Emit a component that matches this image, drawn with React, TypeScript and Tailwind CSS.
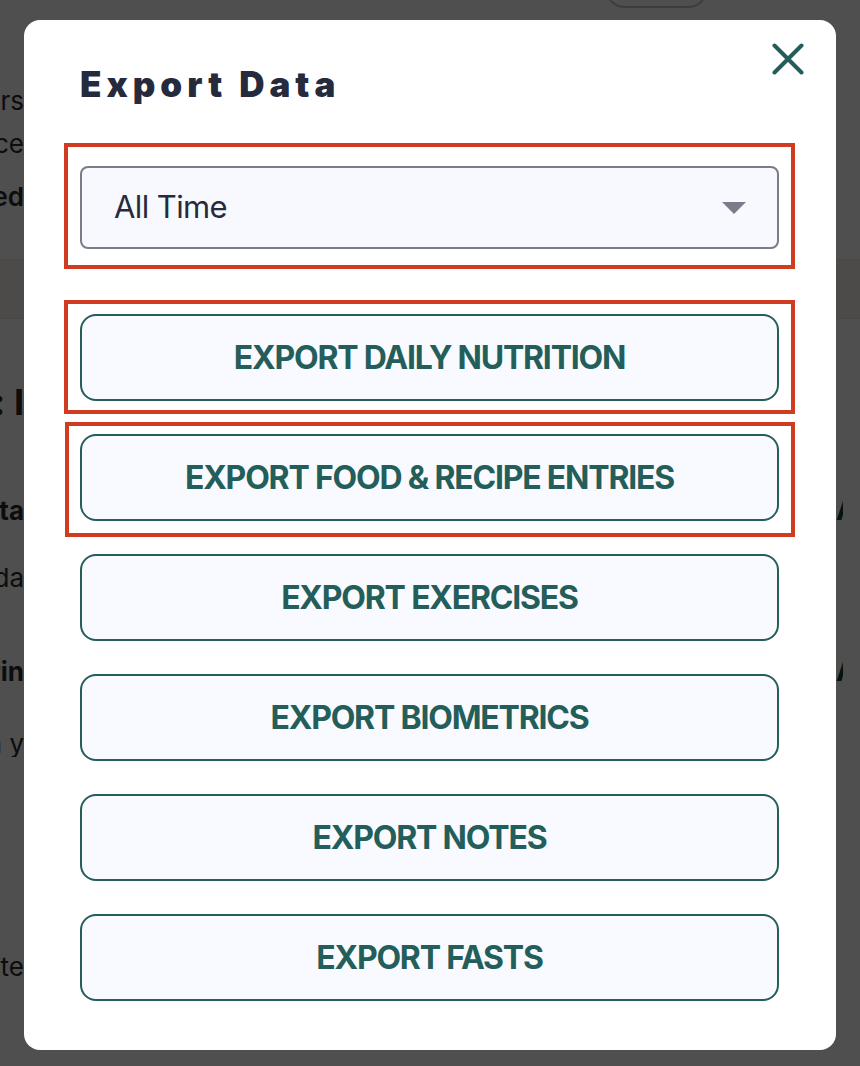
import { ReactNode } from "react";

const options = [
  { label: "EXPORT DAILY NUTRITION", marked: "top-[-14px] bottom-[-13px] left-[-16px] right-[-16px]" },
  { label: "EXPORT FOOD & RECIPE ENTRIES", marked: "top-[-12px] bottom-[-16px] left-[-15px] right-[-16px]" },
  { label: "EXPORT EXERCISES" },
  { label: "EXPORT BIOMETRICS" },
  { label: "EXPORT NOTES" },
  { label: "EXPORT FASTS" },
];

// page sitting behind the dimmed overlay, only its edges show
function EdgeRow({
  left,
  right,
  className,
}: {
  left?: ReactNode;
  right?: ReactNode;
  className?: string;
}) {
  return (
    <div className={`flex items-center justify-between ${className ?? ""}`}>
      <div className="flex w-[24px] justify-end overflow-hidden">
        <span className="shrink-0 whitespace-nowrap">{left}</span>
      </div>
      <div className="flex w-[24px] justify-start">
        <div className="w-[7px] overflow-hidden">
          <span className="block whitespace-nowrap">{right}</span>
        </div>
      </div>
    </div>
  );
}

function BackgroundPage() {
  return (
    <div className="flex h-[1066px] flex-col bg-white text-[26px] leading-[26px] text-[#2a2a2a]">
      <div className="flex h-[10px] pl-[605px]">
        <div className="mt-[-32px] h-[40px] w-[103px] rounded-full border-2 border-[#c4c4c4]" />
      </div>
      <EdgeRow className="mt-[78px]" left="Members" />
      <EdgeRow className="mt-[17px]" left="Balance" />
      <EdgeRow className="mt-[27px] font-semibold" left="Locked" />
      <div className="mt-[49px] h-[60px] border-y border-[#ece9e4] bg-[#f6f3ee]" />
      <EdgeRow className="mt-[63px] text-[36px] leading-[40px] font-bold" left="Data: I" />
      <EdgeRow
        className="mt-[75px] font-bold"
        left="Data"
        right={<span className="text-[28px] font-bold text-[#0e3a35]">A</span>}
      />
      <EdgeRow className="mt-[41px]" left="your da" />
      <EdgeRow
        className="mt-[67px] font-bold"
        left="Sharin"
        right={<span className="text-[28px] font-bold text-[#0e3a35]">A</span>}
      />
      <EdgeRow className="mt-[46px]" left="with y" />
      <EdgeRow className="mt-[197px]" left="Delete" />
    </div>
  );
}

export default function App() {
  return (
    <div className="relative h-[1066px] w-[860px] overflow-hidden font-['Inter',sans-serif]">
      <BackgroundPage />

      <div className="fixed inset-0 flex justify-center bg-black/[0.69] pt-[20px]">
        <div className="relative h-[1030px] w-[812px] rounded-[16px] bg-white pl-[56px] pr-[57px] pt-[44px]">
          <button className="absolute right-[32px] top-[23px] text-[#245e5a]" aria-label="Close">
            <svg width="32" height="32" viewBox="0 0 32 32" fill="none">
              <path
                d="M2.5 2.5 29.5 29.5M29.5 2.5 2.5 29.5"
                stroke="currentColor"
                strokeWidth="4"
                strokeLinecap="round"
              />
            </svg>
          </button>

          <h2 className="text-[35px] font-black leading-[40px] tracking-[5px] text-[#262a3d]">
            Export Data
          </h2>

          {/* period select */}
          <div className="relative mt-[62px]">
            <div className="flex h-[83px] items-center justify-between rounded-lg border-2 border-[#7b7c89] bg-[#f8f9fe] pl-[32px] pr-[31px]">
              <span className="text-[31px] tracking-[-0.6px] text-[#262a3d]">All Time</span>
              <svg width="24" height="12" viewBox="0 0 24 12">
                <path d="M0 0h24L12 12z" fill="#7b7c89" />
              </svg>
            </div>
            <span className="pointer-events-none absolute bottom-[-20px] left-[-16px] right-[-16px] top-[-23px] border-4 border-[#d03c22]" />
          </div>

          <div className="mt-[65px] flex flex-col gap-[33px]">
            {options.map((o) => (
              <div key={o.label} className="relative">
                <button className="flex h-[87px] w-full items-center justify-center rounded-2xl border-2 border-[#245e5a] bg-[#f8faff] text-[32px] font-bold tracking-[-1.2px] text-[#245e5a]">
                  {o.label}
                </button>
                {o.marked && (
                  <span className={`pointer-events-none absolute border-4 border-[#d03c22] ${o.marked}`} />
                )}
              </div>
            ))}
          </div>
        </div>
      </div>
    </div>
  );
}
